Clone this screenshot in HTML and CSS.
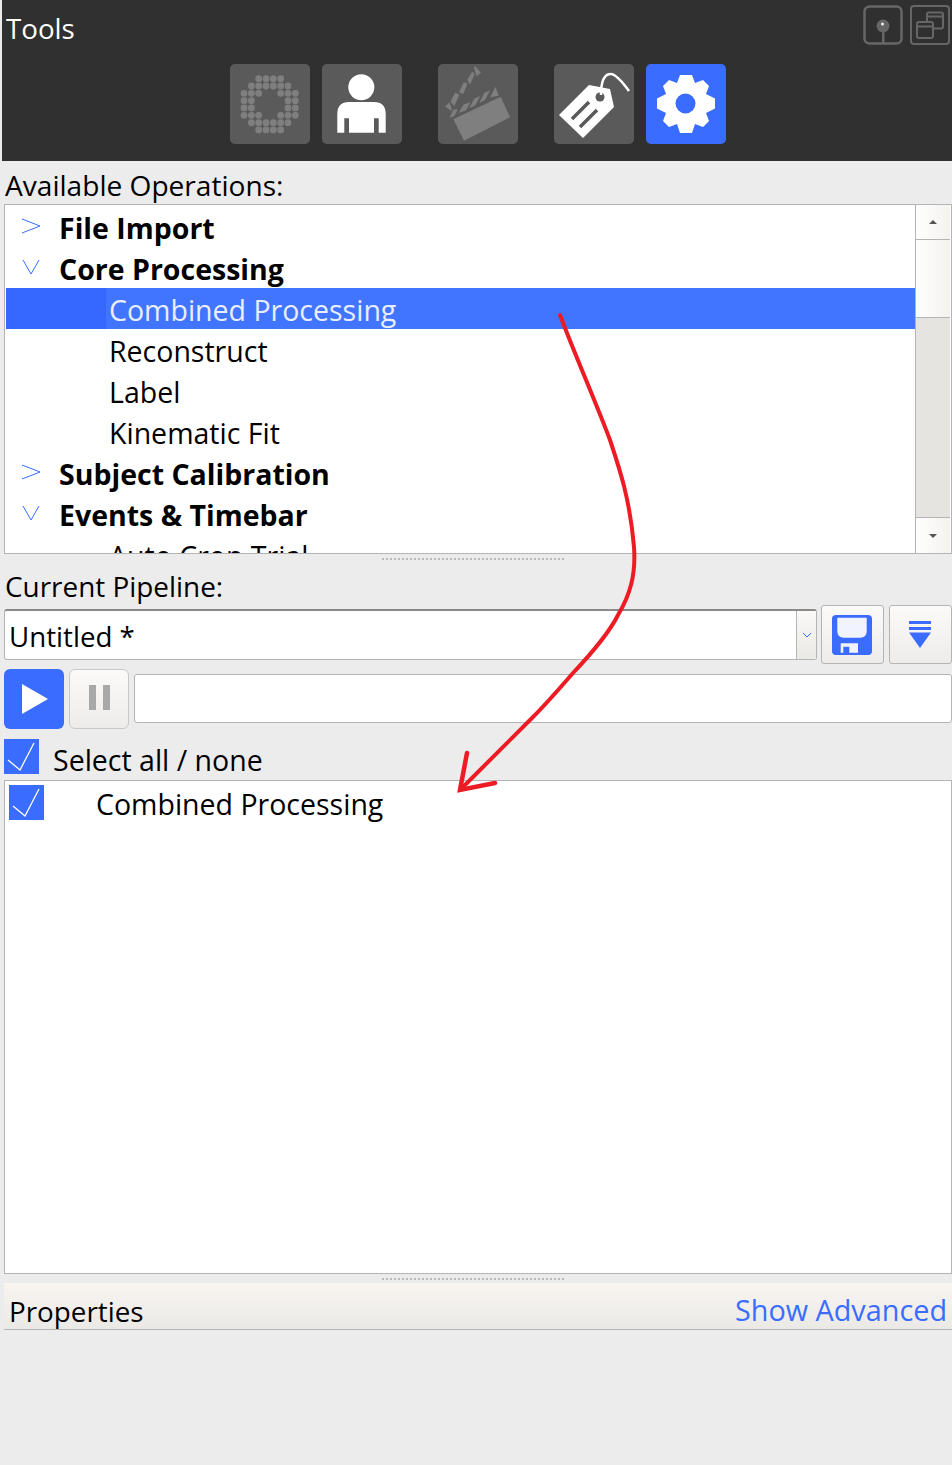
FILE: index.html
```html
<!DOCTYPE html>
<html lang="en">
<head>
    <meta charset="UTF-8">
    <meta name="viewport" content="width=device-width, initial-scale=1.0">
    <title>Tools</title>
    <link rel="stylesheet" href="styles.css">
</head>
<body>
    <div class="panel">
        <header class="tools-header">
            <div class="title-row">
                <span class="title">Tools</span>
                <div class="window-buttons">
                    <button class="win-btn">
                        <svg width="40" height="40" viewBox="0 0 40 40"><rect x="1.500" y="1.500" width="37" height="37" rx="5" fill="none" stroke="#666" stroke-width="2.500"/><circle cx="20" cy="21" r="6.500" fill="#666"/><rect x="19" y="24" width="2.500" height="15" fill="#666"/><circle cx="19.500" cy="19" r="1.500" fill="#eee"/></svg>
                    </button>
                    <button class="win-btn">
                        <svg width="40" height="40" viewBox="0 0 40 40"><rect x="1" y="1" width="38" height="38" rx="3" fill="none" stroke="#666" stroke-width="2"/><rect x="17" y="7.500" width="16" height="16" rx="2" fill="none" stroke="#666" stroke-width="2"/><rect x="7" y="17" width="16" height="16" rx="2" fill="#303030" stroke="#666" stroke-width="2"/><path d="M17 11.500H33M7 21.500H23" stroke="#666" stroke-width="2"/></svg>
                    </button>
                </div>
            </div>
            <div class="tool-row">
                <button class="tool-btn">
                    <svg width="80" height="80" viewBox="0 0 80 80" fill="#7f7f7f" id="dot-ring"></svg>
                </button>
                <button class="tool-btn">
                    <svg width="80" height="80" viewBox="0 0 80 80"><circle cx="39.300" cy="23.300" r="13" fill="#fff"/><path d="M15.300 68.700V50Q15.300 38 27 38H52Q63.700 38 63.700 50V68.700H56.700V54.300H52V68.700H27V54.300H22.300V68.700Z" fill="#fff"/></svg>
                </button>
                <button class="tool-btn group-start">
                    <svg width="80" height="80" viewBox="0 0 80 80" fill="#7f7f7f"><path d="M15.300 55.300L62.700 32.700L72 53.300L26 76.700Z"/><g stroke="#7f7f7f" stroke-width="1.200"><path d="M8 42.700L11.300 39.300L13.300 46ZM13.300 37.700L17.300 29.300L20.700 31L16 41ZM22 27.700L26 19.300L28.700 20L24.700 29.300ZM30 16L34.300 8.700L36 10L32 19.300ZM36.700 2.700L42 8.700L38.700 11.300Z"/><path d="M12.700 52.700L16 46L18.700 46L16 51.500ZM22 47.700L26 41L31.300 39.300L27.300 46ZM32.700 42.700L36.700 35.300L40.700 33.300L36.700 41ZM42.700 37.700L46.700 29.300L50.700 27.700L46.700 35.300ZM53.300 32.700L57.300 24.300L60 31Z"/></g></svg>
                </button>
                <button class="tool-btn group-start">
                    <svg width="80" height="80" viewBox="0 0 80 80"><path d="M5 51L35 21L56 25L60 43L29 74Z" fill="#fff"/><circle cx="46" cy="33" r="4.500" fill="#5a5a5a"/><path d="M18 55L35 38M26 63L43 46" stroke="#5a5a5a" stroke-width="3.500"/><path d="M47 31Q47 11 56 10Q62 9 75 27" fill="none" stroke="#fff" stroke-width="2.500"/></svg>
                </button>
                <button class="tool-btn active">
                    <svg width="80" height="80" viewBox="0 0 80 80"><path d="M34 11H46L49 19L57 16L63 22L60 30L69 34.500V44.500L60 49L63 57L57 63L49 60L46 69H34L31 60L23 63L17 57L20 49L11 44.500V34.500L20 30L17 22L23 16L31 19Z" fill="#fff"/><circle cx="39.500" cy="39.500" r="10" fill="#3a6dff"/></svg>
                </button>
            </div>
        </header>

        <section class="operations">
            <div class="field-label available">Available Operations:</div>
            <div class="tree-box">
                <ul class="tree">
                    <li class="tree-row group"><svg class="twist" width="20" height="20" viewBox="0 0 20 20"><path d="M1 2L19 9L1 16" fill="none" stroke="#3a6dff"/></svg>File Import</li>
                    <li class="tree-row group"><svg class="twist" width="20" height="20" viewBox="0 0 20 20"><path d="M2 2L10 16L18 2" fill="none" stroke="#3a6dff"/></svg>Core Processing</li>
                    <li class="tree-row item selected">Combined Processing</li>
                    <li class="tree-row item">Reconstruct</li>
                    <li class="tree-row item">Label</li>
                    <li class="tree-row item">Kinematic Fit</li>
                    <li class="tree-row group"><svg class="twist" width="20" height="20" viewBox="0 0 20 20"><path d="M1 2L19 9L1 16" fill="none" stroke="#3a6dff"/></svg>Subject Calibration</li>
                    <li class="tree-row group"><svg class="twist" width="20" height="20" viewBox="0 0 20 20"><path d="M2 2L10 16L18 2" fill="none" stroke="#3a6dff"/></svg>Events &amp; Timebar</li>
                    <li class="tree-row item">Auto Crop Trial</li>
                </ul>
                <div class="scrollbar">
                    <div class="scroll-arrow"><span class="arrow-up"></span></div>
                    <div class="scroll-thumb"></div>
                    <div class="scroll-track"></div>
                    <div class="scroll-arrow bottom"><span class="arrow-down"></span></div>
                </div>
            </div>
            <div class="splitter"></div>
        </section>

        <section class="pipeline">
            <div class="field-label">Current Pipeline:</div>
            <div class="combo-row">
                <div class="combo">
                    <span class="combo-text">Untitled *</span>
                    <span class="combo-arrow"><svg width="10" height="6" viewBox="0 0 10 6"><path d="M1 1L5 5L9 1" fill="none" stroke="#3a6dff"/></svg></span>
                </div>
                <button class="icon-btn">
                    <svg width="40" height="40" viewBox="0 0 40 40"><path d="M4 0H36Q40 0 40 4V36Q40 40 36 40H4Q0 40 0 36V4Q0 0 4 0Z" fill="#3a6dff"/><path d="M5.300 2.700H34.700V16Q34.700 22.700 28 22.700H12Q5.300 22.700 5.300 16Z" fill="#f1f4ff"/><path d="M8.700 37.700V28.300H26V37.700H17.300V31.700H11.300V37.700Z" fill="#f1f4ff"/></svg>
                </button>
                <button class="icon-btn">
                    <svg width="24" height="30" viewBox="0 0 24 30"><path d="M1 1H23V4H1ZM1 7H23V10H1ZM1 12.500H23L12 28Z" fill="#3a6dff"/></svg>
                </button>
            </div>
            <div class="run-row">
                <button class="run-btn play">
                    <svg width="26" height="30" viewBox="0 0 26 30"><path d="M0 0L26 15L0 30Z" fill="#fff"/></svg>
                </button>
                <button class="run-btn pause">
                    <span class="pause-bar"></span><span class="pause-bar"></span>
                </button>
                <div class="run-input"></div>
            </div>
            <div class="select-all">
                <span class="check"><svg width="35" height="35" viewBox="0 0 35 35"><path d="M4 21L16 31L30 4" fill="none" stroke="#fff" stroke-width="1.300"/></svg></span>
                <span class="select-label">Select all / none</span>
            </div>
            <div class="pipeline-list">
                <div class="pipeline-item">
                    <span class="check"><svg width="35" height="35" viewBox="0 0 35 35"><path d="M4 21L16 31L30 4" fill="none" stroke="#fff" stroke-width="1.300"/></svg></span>
                    <span class="item-label">Combined Processing</span>
                </div>
            </div>
            <div class="splitter"></div>
        </section>

        <div class="properties-bar">
            <span class="properties-title">Properties</span>
            <a class="show-advanced">Show Advanced</a>
        </div>
    </div>

    <svg class="annotation" width="952" height="1465" viewBox="0 0 952 1465">
        <path d="M560 315C575 355 595 400 610 440C620 470 630 500 634 547C636 575 630 595 618 615C608 635 590 655 573 673C560 688 545 705 533 717L460 790" fill="none" stroke="#ed1c24" stroke-width="4" stroke-linecap="round"/>
        <path d="M467 753L460 790L495 783" fill="none" stroke="#ed1c24" stroke-width="4.500" stroke-linecap="round"/>
    </svg>

<script>
// dots of the ring icon, 7.3px apart
const ring = document.getElementById('dot-ring');
let dots = '';
for (let row = 0; row < 8; row++) {
    for (let col = 0; col < 8; col++) {
        const x = 39.7 + (col - 3.5) * 7.33;
        const y = 40.3 + (row - 3.5) * 7.33;
        const dist = Math.hypot(x - 39.7, y - 40.3);
        if (dist > 13 && dist < 31) {
            dots += `<circle cx="${x}" cy="${y}" r="3.4"/>`;
        }
    }
}
ring.innerHTML = dots;
</script>
</body>
</html>
```

FILE: styles.css
```css
:root {
    --blue: #3a6dff;
    --line: #b4b4b4;
    --bg: #ececec;
}

* {
    box-sizing: border-box;
}

html, body {
    margin: 0;
    padding: 0;
}

body {
    width: 952px;
    height: 1465px;
    background: var(--bg);
    font-family: 'Open Sans', sans-serif;
    font-size: 28.5px;
    color: #000;
    overflow: hidden;
    position: relative;
}

button {
    padding: 0;
    border: none;
    background: none;
    font: inherit;
}

.annotation {
    position: absolute;
    left: 0;
    top: 0;
    pointer-events: none;
}

/* header */
.tools-header {
    margin-left: 2px;
    height: 161px;
    background: #303030;
    color: #fff;
}

.title-row {
    height: 64px;
    display: flex;
    justify-content: space-between;
    padding: 5px 2px 0 4px;
}

.title {
    font-size: 27.7px;
    line-height: 46px;
}

.window-buttons {
    display: flex;
    gap: 7px;
}

.win-btn {
    width: 40px;
    height: 40px;
}

.tool-row {
    display: flex;
    gap: 12px;
    padding-left: 228px;
}

.tool-btn {
    width: 80px;
    height: 80px;
    background: #5a5a5a;
    border-radius: 5px;
    overflow: hidden;
}

.tool-btn svg {
    display: block;
}

.tool-btn.group-start {
    margin-left: 24px;
}

.tool-btn.active {
    background: var(--blue);
}

/* operations tree */
.field-label {
    padding-left: 5px;
    height: 43px;
    line-height: 50px;
    font-size: 27.9px;
}

.field-label.available {
    font-size: 28.1px;
    line-height: 48px;
}

.tree-box {
    margin-left: 4px;
    height: 350px;
    background: #fff;
    border: 1px solid var(--line);
    display: flex;
    overflow: hidden;
}

.tree {
    list-style: none;
    margin: 0;
    padding: 1px 0 0 1px;
    width: 910px;
    height: 348px;
    overflow: hidden;
}

.tree-row {
    height: 41px;
    line-height: 45px;
    white-space: nowrap;
}

.tree-row.group {
    font-weight: 700;
    padding-left: 53px;
    position: relative;
}

.twist {
    position: absolute;
    left: 15px;
    top: 11px;
}

.tree-row.item {
    padding-left: 103px;
}

.tree-row.selected {
    background: linear-gradient(to right, #3668ff 100px, #4175ff 100px);
    color: #e8eeff;
}

.scrollbar {
    width: 35px;
    margin-left: 0;
    border-left: 1px solid var(--line);
    display: flex;
    flex-direction: column;
}

.scroll-arrow {
    height: 35px;
    background: linear-gradient(to right, #fff, #f5f2ef);
    border-bottom: 1px solid var(--line);
    display: flex;
    align-items: center;
    justify-content: center;
}

.scroll-arrow.bottom {
    height: 36px;
    border-bottom: none;
    border-top: 1px solid var(--line);
}

.arrow-up {
    border-left: 4px solid transparent;
    border-right: 4px solid transparent;
    border-bottom: 4px solid #555;
}

.arrow-down {
    border-left: 4px solid transparent;
    border-right: 4px solid transparent;
    border-top: 4px solid #555;
}

.scroll-thumb {
    height: 78px;
    background: linear-gradient(to right, #fff, #f5f2ef);
    border-bottom: 1px solid var(--line);
}

.scroll-track {
    flex: 1;
    background: #e5e4e1;
}

.splitter {
    width: 184px;
    height: 2px;
    margin: 4px 0 0 382px;
    background: repeating-linear-gradient(to right, #bbb 0, #bbb 2px, transparent 2px, transparent 4px);
}

/* pipeline */
.pipeline > .field-label {
    height: 45px;
    line-height: 52px;
}

.combo-row {
    display: flex;
    align-items: center;
    margin-left: 4px;
    height: 59px;
}

.combo {
    width: 813px;
    height: 51px;
    display: flex;
    background: #fff;
    border: 1px solid var(--line);
    border-top: 2px solid #8a8a8a;
    border-radius: 3px;
}

.combo-text {
    flex: 1;
    padding-left: 4px;
    font-size: 27.7px;
    line-height: 51px;
}

.combo-arrow {
    width: 20px;
    border-left: 1px solid var(--line);
    background: linear-gradient(to bottom, #fbf9f7, #ebe9e6);
    display: flex;
    align-items: center;
    justify-content: center;
}

.icon-btn {
    width: 63px;
    height: 59px;
    margin-left: 4px;
    padding-right: 2px;
    background: linear-gradient(to bottom, #fcfaf8, #eeecea);
    border: 1px solid var(--line);
    border-radius: 3px;
    display: flex;
    align-items: center;
    justify-content: center;
}

.icon-btn:last-child {
    margin-left: 5px;
}

.run-row {
    display: flex;
    align-items: center;
    gap: 5px;
    margin: 5px 0 0 4px;
    height: 60px;
}

.run-btn {
    width: 60px;
    height: 60px;
    border-radius: 6px;
    display: flex;
    align-items: center;
    justify-content: center;
    gap: 7px;
}

.run-btn.play {
    background: var(--blue);
    padding: 0 0 0 2px;
}

.run-btn.pause {
    background: linear-gradient(to bottom, #fcfaf8, #eeecea);
    border: 1px solid #c8c8c8;
    padding-bottom: 4px;
}

.pause-bar {
    width: 7px;
    height: 25px;
    background: #a8a8a8;
}

.run-input {
    flex: 1;
    height: 49px;
    margin-bottom: 2px;
    background: #fff;
    border: 1px solid var(--line);
    border-radius: 3px;
}

.check {
    width: 35px;
    height: 35px;
    background: var(--blue);
    flex: none;
}

.check svg {
    display: block;
}

.select-all {
    display: flex;
    align-items: center;
    gap: 14px;
    margin: 10px 0 0 4px;
    height: 35px;
}

.select-label {
    padding-top: 6px;
}

.pipeline-list {
    margin: 6px 0 0 4px;
    height: 494px;
    background: #fff;
    border: 1px solid var(--line);
    padding: 4px;
}

.pipeline-item {
    display: flex;
    align-items: center;
    gap: 52px;
    height: 35px;
}

.item-label {
    padding-top: 2px;
}

/* properties */
.properties-bar {
    margin: 3px 0 0 4px;
    height: 47px;
    display: flex;
    justify-content: space-between;
    align-items: flex-end;
    padding: 0 5px 0 5px;
    background: linear-gradient(to bottom, #f8f5f1, #ebe9e6);
    border-bottom: 1px solid var(--line);
    line-height: 36px;
}

.properties-title {
    font-size: 27.8px;
}

.show-advanced {
    color: var(--blue);
    font-size: 28.8px;
    line-height: 38px;
}
```
